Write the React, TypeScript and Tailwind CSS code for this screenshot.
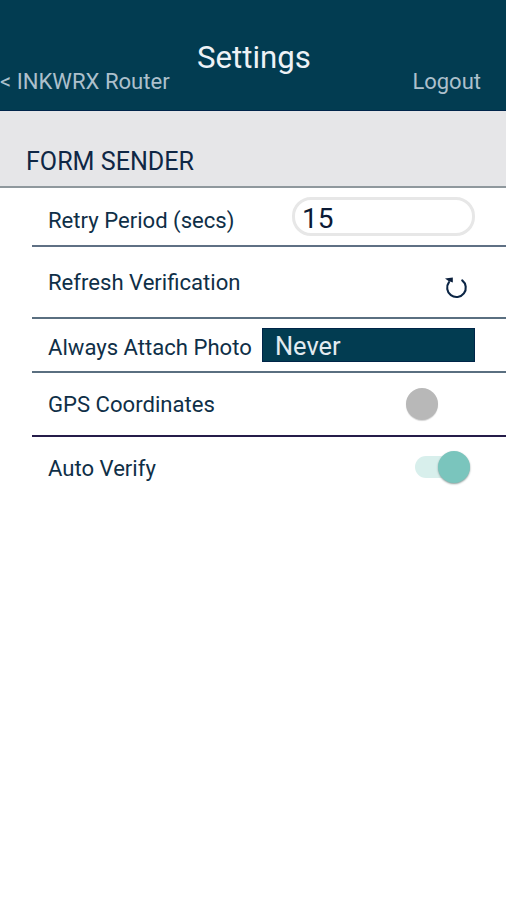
import type { ReactNode } from "react";

const label = "text-[22.1px] leading-[26px] whitespace-nowrap text-[#0f2f47]";

function Row({ className, children }: { className: string; children: ReactNode }) {
  return (
    <div className={`ml-8 flex justify-between pl-4 ${className}`}>
      {children}
    </div>
  );
}

function RefreshIcon() {
  return (
    <svg width="24" height="24" viewBox="0 0 24 24" fill="none">
      <path d="M18.2 5.4A9.3 9.3 0 1 1 5 7.2" stroke="#0b2545" strokeWidth="2.1" strokeLinecap="round" />
      <path d="M1 3.6L8.8 2.4V7.4L4.6 6Z" fill="#0b1f3c" />
    </svg>
  );
}

export default function App() {
  return (
    <div className="h-[900px] w-[506px] overflow-hidden bg-white font-['Roboto',sans-serif]">
      {/* Header */}
      <header className="grid h-[111px] grid-cols-[197px_114px_1fr] items-start border-b border-[#00254a] bg-[#023c51]">
        <button className="mt-[68px] text-left text-[22.1px] leading-[26px] whitespace-nowrap text-[#adc0cc]">
          &lt; INKWRX Router
        </button>
        <h1 className="mt-[40px] text-[31.2px] leading-[36px] whitespace-nowrap text-[#eef2f6]">Settings</h1>
        <button className="mt-[69px] mr-[25px] justify-self-end text-[22px] leading-[26px] text-[#adc0cc]">
          Logout
        </button>
      </header>

      {/* Section title */}
      <div className="h-[77px] border-b-2 border-[#8f989d] bg-[#e6e6e8] pt-[37px] pl-[26px]">
        <h2 className="text-[25.1px] leading-[28px] text-[#0f2745]">FORM SENDER</h2>
      </div>

      <Row className="h-[59px] border-b-2 border-[#5f7084]">
        <span className={`mt-[19px] ${label}`}>Retry Period (secs)</span>
        <input
          className="mt-[9px] mr-[31px] h-[39px] w-[183px] rounded-[19px] border-[3px] border-[#e7e7e7] pt-[3px] pl-[7px] text-[28px] leading-[30px] text-[#0b1a35] outline-none"
          defaultValue="15"
        />
      </Row>

      <Row className="h-[72px] border-b-2 border-[#5a6f80]">
        <span className={`mt-[22px] ${label}`}>Refresh Verification</span>
        <button className="mt-[28px] mr-[38px] h-6" aria-label="Refresh">
          <RefreshIcon />
        </button>
      </Row>

      <Row className="h-[54px] border-b-2 border-[#5a6f80]">
        <span className={`mt-[15px] ${label}`}>Always Attach Photo</span>
        <button className="mt-[9px] mr-[31px] h-[34px] w-[213px] border border-[#002548] bg-[#023c51] pl-[12px] text-left text-[25.4px] leading-[34px] text-[#e3ebf0]">
          Never
        </button>
      </Row>

      <Row className="h-[64px] border-b-2 border-[#251c49]">
        <span className={`mt-[18px] ${label}`}>GPS Coordinates</span>
        <button className="mt-[15px] mr-[68px] size-8 rounded-full bg-[#b8b8b8] shadow-[0_1px_1px_#d4d4d4]" aria-label="GPS Coordinates" />
      </Row>

      <Row className="h-[64px]">
        <span className={`mt-[18px] ${label}`}>Auto Verify</span>
        <button
          className="mt-[19px] mr-[36px] flex h-[22px] w-[55px] items-center justify-end rounded-full bg-[#d8efec]"
          aria-label="Auto Verify"
        >
          <span className="size-8 shrink-0 rounded-full bg-[#7ac5bd] shadow-[0_1px_2px_#8a9c9a]" />
        </button>
      </Row>
    </div>
  );
}
